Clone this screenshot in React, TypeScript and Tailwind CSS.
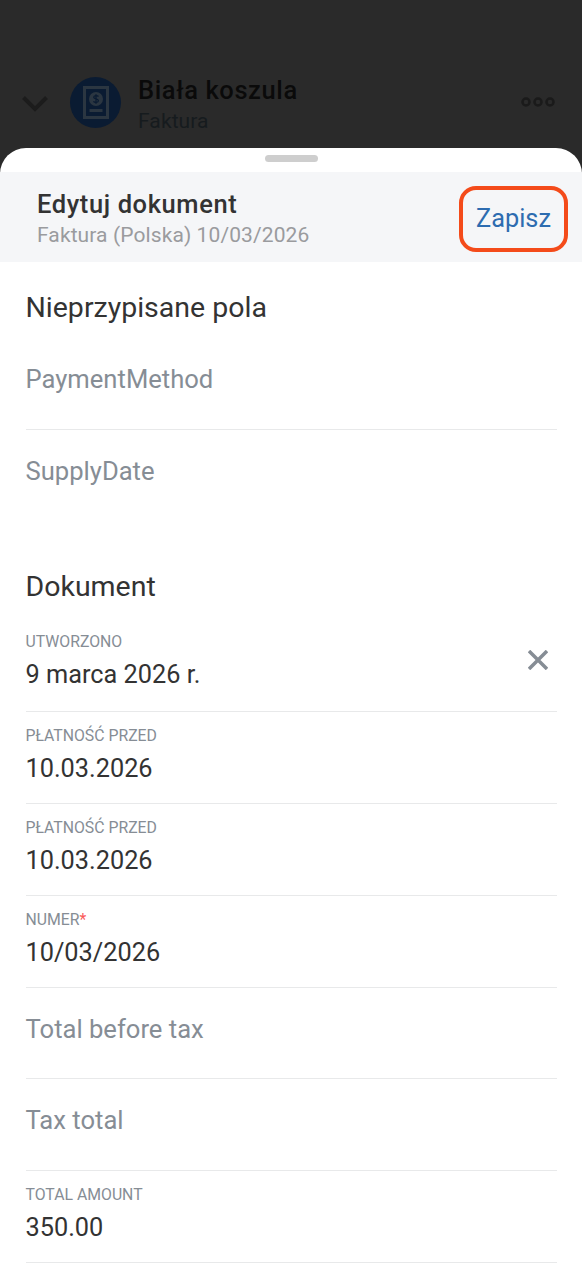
import { clsx } from 'clsx';

interface FieldProps {
  label: string;
  value?: string;
  required?: boolean;
  clearable?: boolean;
  last?: boolean;
  className?: string;
}

/** Single form row: floating label with a value, or a placeholder when empty */
function Field({ label, value, required, clearable, last, className = 'h-[92px]' }: FieldProps) {
  return (
    <div className={clsx('flex shrink-0 justify-between', !last && 'border-b border-[#e8e9ea]', className)}>
      {value ? (
        <div className="pt-[14px]">
          <div className="text-[15.8px] leading-5 text-[#868d95]">
            {label}
            {required && <span className="text-[#fa5a5a]">*</span>}
          </div>
          <div className="mt-[7px] text-[25.3px] leading-8 text-[#333333]">{value}</div>
        </div>
      ) : (
        <div className="pt-[25px] text-[25.6px] leading-8 text-[#868d95]">{label}</div>
      )}
      {clearable && (
        <button className="mt-8 mr-[9.5px] h-5 w-5" aria-label="Wyczyść">
          <svg viewBox="0 0 20 20" className="h-5 w-5" fill="none" stroke="#868d95" strokeWidth="3.5">
            <path d="M1 1L19 19M19 1L1 19" />
          </svg>
        </button>
      )}
    </div>
  );
}

function TopBar() {
  return (
    <div className="flex h-[163px] shrink-0 items-start pl-[22px] pr-[27px] pt-[77px]">
      <svg viewBox="0 0 26 16" className="mt-[19px] h-4 w-[26px]" fill="none" stroke="#1c1c1c" strokeWidth="4">
        <path d="M1.5 1.5L13 13L24.5 1.5" />
      </svg>
      <div className="ml-[22px] flex h-[51px] w-[51px] items-center justify-center rounded-full bg-[#0a1b32]">
        <svg viewBox="0 0 26 34" className="h-[34px] w-[26px]">
          <rect x="1.5" y="1.5" width="23" height="30" fill="none" stroke="#2b3641" strokeWidth="3" />
          <circle cx="13" cy="13" r="7" fill="#2b3641" />
          <path
            d="M15.5 10.5C14.5 9.3 10.7 9.2 10.7 11.3C10.7 13.4 15.4 12.5 15.4 14.7C15.4 16.8 11.5 16.7 10.4 15.3M13 8.3V17.7"
            fill="none"
            stroke="#0a1b32"
            strokeWidth="1.3"
          />
          <rect x="6.5" y="23" width="13" height="3" fill="#2b3641" />
        </svg>
      </div>
      <div className="ml-[17px] -mt-px flex-1">
        <div className="text-[25.5px] font-medium leading-7 tracking-[0.6px] text-[#0a0a0a]">Biała koszula</div>
        <div className="mt-[3px] text-[21px] leading-7 tracking-[0.1px] text-[#161b1e]">Faktura</div>
      </div>
      <svg viewBox="0 0 34 10" className="mt-5 h-2.5 w-[34px]" fill="none" stroke="#1a1a1a" strokeWidth="2.5">
        <circle cx="5" cy="5" r="3.5" />
        <circle cx="17" cy="5" r="3.5" />
        <circle cx="29" cy="5" r="3.5" />
      </svg>
    </div>
  );
}

function SheetHeader() {
  return (
    <div className="flex h-[90px] shrink-0 items-start justify-between bg-[#f5f6f8] pl-[37px] pr-[14px]">
      <div className="pt-[18px]">
        <div className="text-[25.5px] font-medium leading-7 tracking-[0.6px] text-[#333333]">Edytuj dokument</div>
        <div className="mt-[3px] text-[21px] leading-7 tracking-[0.1px] text-[#9a9b9e]">
          Faktura (Polska) 10/03/2026
        </div>
      </div>
      <button className="mt-[14px] flex h-[66px] w-[109px] items-center justify-center rounded-[17px] border-4 border-[#f44b1a] text-[25.3px] text-[#2d6cb0]">
        Zapisz
      </button>
    </div>
  );
}

export default function App() {
  return (
    <div className="flex h-[1280px] w-[582px] flex-col overflow-hidden bg-[#2a2a2a] font-['Roboto',sans-serif]">
      <TopBar />
      <div className="-mt-[15px] flex flex-1 flex-col overflow-hidden rounded-t-[26px] bg-white">
        <div className="flex h-6 shrink-0 justify-center pt-[7px]">
          <div className="h-[7px] w-[53px] rounded-full bg-[#cecece]" />
        </div>
        <SheetHeader />

        <div className="flex flex-col pl-[25.5px] pr-[25px]">
          <h2 className="h-[76px] pt-[28px] text-[28.5px] leading-9 text-[#333333]">Nieprzypisane pola</h2>
          <Field label="PaymentMethod" />
          <Field label="SupplyDate" last />

          <h2 className="h-24 pt-[47px] text-[28.5px] leading-9 text-[#333333]">Dokument</h2>
          <Field label="UTWORZONO" value="9 marca 2026 r." clearable className="h-[94px]" />
          <Field label="PŁATNOŚĆ PRZED" value="10.03.2026" />
          <Field label="PŁATNOŚĆ PRZED" value="10.03.2026" />
          <Field label="NUMER" value="10/03/2026" required />
          <Field label="Total before tax" className="h-[91px]" />
          <Field label="Tax total" />
          <Field label="TOTAL AMOUNT" value="350.00" />
        </div>
      </div>
    </div>
  );
}
